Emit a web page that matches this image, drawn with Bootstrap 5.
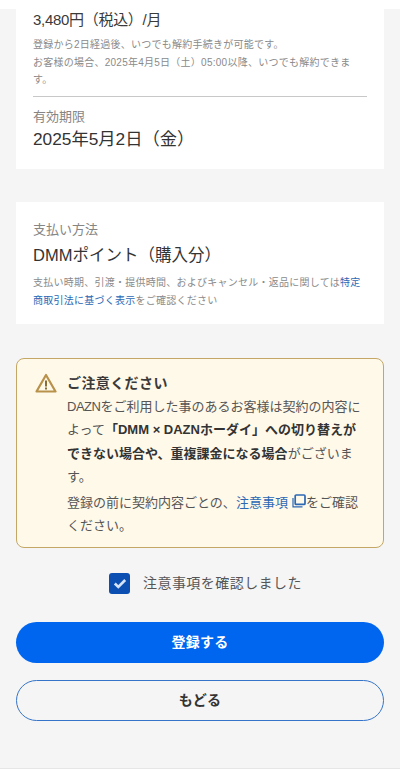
<!DOCTYPE html>
<html lang="ja">
<head>
<meta charset="utf-8">
<meta name="viewport" content="width=device-width, initial-scale=1">
<link href="https://cdn.jsdelivr.net/npm/bootstrap@5.3.0/dist/css/bootstrap.min.css" rel="stylesheet">
<style>
html, body { height: 770px; overflow: hidden; }
body { background: #f5f5f5; font-family: "Liberation Sans", "Noto Sans CJK JP", sans-serif; color: #333; }
.top-strip { height: 9px; background: #fff; }
.sheet { background: #fff; margin: 0 16px; padding: 0 17px; }
.sheet-plan { height: 160px; padding-top: 1px; }
.sheet-pay { height: 122px; margin-top: 33px; padding-top: 19px; }
.price { font-size: 15px; letter-spacing: -.3px; line-height: 20px; color: #3a3a3a; }
.note { font-size: 10px; letter-spacing: .25px; line-height: 17.5px; color: #8a8a8a; margin: 0; }
.notes-top { padding-top: 6px; }
.sep { border: 0; border-top: 1px solid #c8c8c8; opacity: 1; margin: 7px 0 11px; }
.lbl { font-size: 13px; line-height: 18px; color: #858585; }
.val { font-size: 17.3px; line-height: 26px; color: #333; margin-top: 0; }
.sheet-pay .val { font-size: 16.5px; margin-top: 3px; }
.sheet-pay .note { margin-top: 6px; }
.note a, .warn a { color: #2c68b4; text-decoration: none; }
.warn { margin: 34px 16px 0; height: 190px; background: #fff9ea; border: 1px solid #c4a765; border-radius: 8px; padding: 13px 20px 0 17px; gap: 10px; }
.warn-ico { width: 22px; height: 20px; flex: none; margin: 1px 0 0 1px; }
.warn-title { font-size: 14px; letter-spacing: .4px; line-height: 22px; font-weight: 700; color: #3a3a3a; }
.warn-body { font-size: 13px; line-height: 23.4px; color: #555; margin: 1px 0 0; }
.warn-body b { color: #333; font-weight: 700; }
.warn-body + .warn-body { margin-top: 2px; }
.latin-tight { letter-spacing: -.5px; }
.ext { width: 14px; height: 14px; vertical-align: -1px; }
.agree { margin-top: 24px; height: 22px; gap: 13px; padding-left: 11px; font-size: 14px; letter-spacing: .45px; color: #555; }
.tick { width: 21px; height: 21px; border-radius: 3px; background: #0c4fb3; flex: none; }
.acts { margin: 28px 16px 0; gap: 17px; }
.btn-main, .btn-back { height: 41px; border-radius: 21px; font-size: 14px; font-weight: 700; padding: 0; letter-spacing: .3px; }
.btn-main { background: #0066f0; border: 0; color: #fff; }
.btn-back { background: #f5f5f5; border: 1px solid #3574c9; color: #333; }
.foot-line { position: absolute; left: 0; right: 0; top: 768px; height: 2px; background: #fff; border-top: 1px solid #e6e6e6; }
</style>
</head>
<body>
<div class="top-strip"></div>
<section class="sheet sheet-plan">
  <div class="price">3,480円（税込）/月</div>
  <div class="notes-top">
    <p class="note">登録から2日経過後、いつでも解約手続きが可能です。</p>
    <p class="note">お客様の場合、2025年4月5日（土）05:00以降、いつでも解約できます。</p>
  </div>
  <hr class="sep">
  <div class="lbl">有効期限</div>
  <div class="val">2025年5月2日（金）</div>
</section>
<section class="sheet sheet-pay">
  <div class="lbl">支払い方法</div>
  <div class="val">DMMポイント（購入分）</div>
  <p class="note">支払い時期、引渡・提供時間、およびキャンセル・返品に関しては<a href="#">特定商取引法に基づく表示</a>をご確認ください</p>
</section>
<section class="warn d-flex">
  <svg class="warn-ico" viewBox="0 0 22 20" aria-hidden="true">
    <path d="M11 2 L20.5 18.5 H1.5 Z" fill="none" stroke="#b8914a" stroke-width="2.2" stroke-linejoin="round"/>
    <rect x="10" y="7.5" width="2" height="6" fill="#8a6d35"/>
    <rect x="10" y="14.5" width="2" height="2" fill="#8a6d35"/>
  </svg>
  <div>
    <div class="warn-title">ご注意ください</div>
    <p class="warn-body"><span class="latin-tight">DAZN</span>をご利用した事のあるお客様は契約の内容によって<b>「DMM × DAZNホーダイ」への切り替えができない場合や、重複課金になる場合</b>がございます。</p>
    <p class="warn-body">登録の前に契約内容ごとの、<a href="#">注意事項<svg class="ext ms-1" viewBox="0 0 14 14" aria-hidden="true"><path d="M1 4 V12.8 H10.5" fill="none" stroke="#2c68b4" stroke-width="1.2"/><rect x="3.2" y="1" width="9.8" height="9.4" rx="1" fill="none" stroke="#2c68b4" stroke-width="1.7"/></svg></a>をご確認ください。</p>
  </div>
</section>
<div class="agree d-flex align-items-center justify-content-center">
  <span class="tick d-flex align-items-center justify-content-center">
    <svg width="14" height="11" viewBox="0 0 14 11" aria-hidden="true"><path d="M1.8 5.5 L5.3 9 L12.2 2" fill="none" stroke="#d5e4fa" stroke-width="2.6"/></svg>
  </span>
  <span>注意事項を確認しました</span>
</div>
<div class="acts d-flex flex-column">
  <button type="button" class="btn btn-main w-100">登録する</button>
  <button type="button" class="btn btn-back w-100">もどる</button>
</div>
<div class="foot-line"></div>
<script src="https://cdn.jsdelivr.net/npm/bootstrap@5.3.0/dist/js/bootstrap.bundle.min.js"></script>
</body>
</html>
